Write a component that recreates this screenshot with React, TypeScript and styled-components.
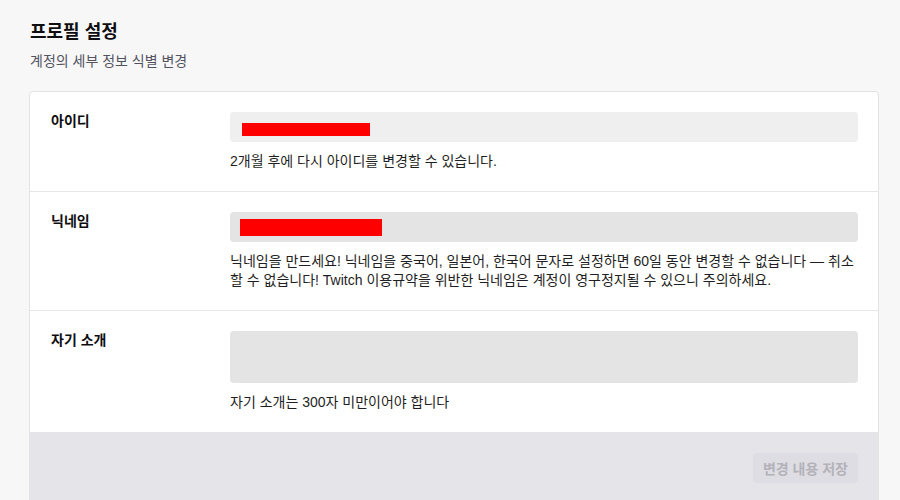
import React from "react";
import styled, { createGlobalStyle } from "styled-components";

const Global = createGlobalStyle`
  html, body { margin: 0; padding: 0; background: #f7f7f8; }
  body {
    font-family: "Liberation Sans", "Noto Sans CJK KR", sans-serif;
    color: #0e0e10;
    font-size: 14px;
  }
`;

const Page = styled.div`
  padding: 21px 21px 0 29px;
  height: 500px;
  box-sizing: border-box;
  overflow: hidden;
`;

const Header = styled.div`
  padding-left: 1px;
  margin-bottom: 20px;
`;

const Title = styled.h1`
  margin: 0;
  font-size: 18px;
  line-height: 22px;
  font-weight: 700;
  color: #0e0e10;
`;

const Subtitle = styled.p`
  margin: 8px 0 0;
  font-size: 14px;
  line-height: 20px;
  color: #53535f;
`;

const Card = styled.div`
  background: #fff;
  border: 1px solid #e3e3e6;
  border-radius: 4px;
  overflow: hidden;
`;

const Row = styled.div`
  display: grid;
  grid-template-columns: 180px 1fr;
  padding: 20px;
  border-bottom: 1px solid #e6e6e8;
`;

const Label = styled.div`
  font-weight: 700;
  font-size: 14px;
  line-height: 19px;
  padding-left: 1px;
`;

const Field = styled.div`
  display: flex;
  flex-direction: column;
  gap: 10px;
`;

const Input = styled.div<{ $bg: string; $h: number }>`
  height: ${(p) => p.$h}px;
  background: ${(p) => p.$bg};
  border-radius: 4px;
  display: flex;
  align-items: center;
  box-sizing: border-box;
`;

const Redact = styled.div<{ $w: number; $h: number; $ml: number; $mt: number }>`
  width: ${(p) => p.$w}px;
  height: ${(p) => p.$h}px;
  margin-left: ${(p) => p.$ml}px;
  margin-top: ${(p) => p.$mt}px;
  background: #ff0000;
`;

const Help = styled.p`
  margin: 0;
  font-size: 14px;
  line-height: 19px;
  color: #1f1f23;
`;

const Footer = styled.div`
  background: #e5e4e9;
  padding: 20px;
  display: flex;
  justify-content: flex-end;
  height: 120px;
`;

const SaveButton = styled.button`
  height: 30px;
  padding: 0 10px;
  border: none;
  border-radius: 4px;
  background: #dedde3;
  color: #b3b2b9;
  font-family: inherit;
  font-size: 14px;
  font-weight: 600;
  cursor: not-allowed;
`;

export default function App() {
  return (
    <>
      <Global />
      <Page>
        <Header>
          <Title>프로필 설정</Title>
          <Subtitle>계정의 세부 정보 식별 변경</Subtitle>
        </Header>
        <Card>
          <Row>
            <Label>아이디</Label>
            <Field>
              <Input $bg="#efeff0" $h={30}>
                <Redact $w={128} $h={13} $ml={12} $mt={4} />
              </Input>
              <Help>2개월 후에 다시 아이디를 변경할 수 있습니다.</Help>
            </Field>
          </Row>
          <Row>
            <Label>닉네임</Label>
            <Field>
              <Input $bg="#e4e4e4" $h={30}>
                <Redact $w={142} $h={17} $ml={10} $mt={0} />
              </Input>
              <Help>
                닉네임을 만드세요! 닉네임을 중국어, 일본어, 한국어 문자로 설정하면 60일 동안 변경할 수 없습니다 — 취소할 수 없습니다! Twitch 이용규약을 위반한 닉네임은 계정이 영구정지될 수 있으니 주의하세요.
              </Help>
            </Field>
          </Row>
          <Row>
            <Label>자기 소개</Label>
            <Field>
              <Input $bg="#e4e4e4" $h={52} />
              <Help>자기 소개는 300자 미만이어야 합니다</Help>
            </Field>
          </Row>
          <Footer>
            <SaveButton disabled>변경 내용 저장</SaveButton>
          </Footer>
        </Card>
      </Page>
    </>
  );
}
